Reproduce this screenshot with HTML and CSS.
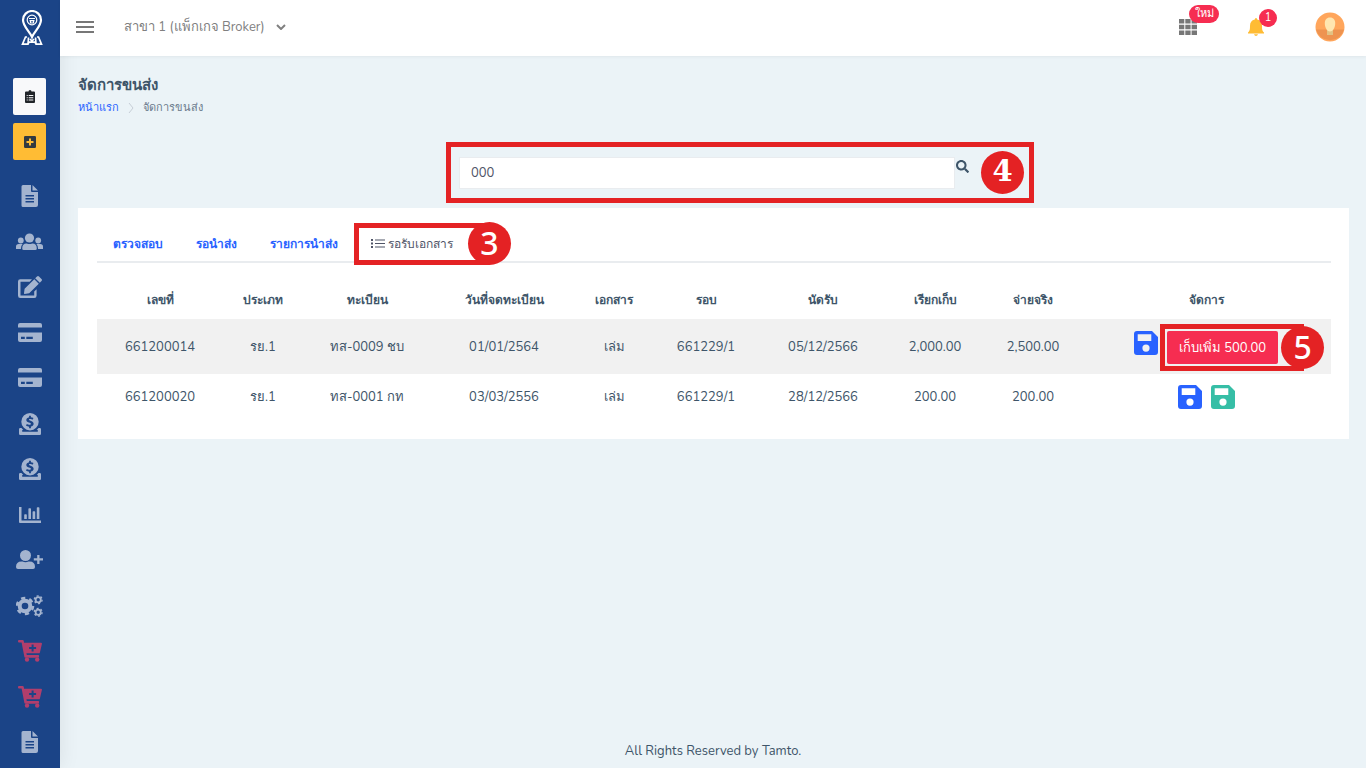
FILE: index.html
```html
<!DOCTYPE html>
<html lang="th">
<head>
<meta charset="utf-8">
<meta name="viewport" content="width=device-width, initial-scale=1">
<title>จัดการขนส่ง</title>
<link rel="stylesheet" href="styles.css">
</head>
<body>
<svg class="sprite" aria-hidden="true">
  <symbol id="file" viewBox="0 0 18 22"><path fill-rule="evenodd" d="M2 0h8v6q0 1 1 1h6v13q0 2-2 2H2q-1.500 0-1.500-1.500v-19Q.5 0 2 0zM4.500 10v1.500h8.500V10zm0 3v1.500h8.500V13zm0 3v1.500h8.500V16zM11.500 0l5.500 5.500h-5.500z"/></symbol>
  <symbol id="users" viewBox="0 0 27 18"><circle cx="4.800" cy="7.500" r="2.900"/><circle cx="22.200" cy="7.500" r="2.900"/><circle cx="13.500" cy="5" r="4.600"/><path d="M0 16v-2.500Q0 11 2.800 11h3.800q-1.600 1.500-1.700 5zM27 16v-2.500q0-2.500-2.800-2.500h-3.800q1.600 1.500 1.700 5zM6.200 15.500q0-5 4.500-5 2.800 1.200 5.600 0 4.500 0 4.500 5 0 1.500-1.500 1.500H7.700q-1.500 0-1.500-1.500z"/></symbol>
  <symbol id="edit" viewBox="0 0 24 22"><path d="M14 3.200H2.300Q0 3.200 0 5.500v14Q0 22 2.300 22h14q2.300 0 2.300-2.500v-6.200L16.200 15.500v4.100H2.500V5.700h9.200z"/><path d="M16.300 3.200l4.500 4.500-9.600 9.600-4.600.6q-.7 0-.6-.7l.6-4.500zM17.200 2.200L19 .5q1-1 2 0l2.500 2.500q1 1 0 2l-1.700 1.700z"/></symbol>
  <symbol id="card" viewBox="0 0 24 20"><path fill-rule="evenodd" d="M2 0h20q2 0 2 2v2.500H0V2q0-2 2-2zM0 9.500h24V17q0 2-2 2H2q-2 0-2-2zm3 4.200V16h3.800v-2.300zm5.300 0V16h6.500v-2.300z"/></symbol>
  <symbol id="donate" viewBox="0 0 22 22"><path fill-rule="evenodd" d="M11 0a8.700 8.700 0 1 1 0 17.400A8.700 8.700 0 0 1 11 0zm-.9 2.800v1.500C6.500 5 6.500 8.700 9.800 9.600c3.400.9 2.300 2.300.4 2.200-.9-.1-1.600-.4-2.300-.9l-1 1.700c1 .7 2 1 3.200 1.100v1.500h1.800v-1.600c3.700-.8 3.600-4.700.2-5.700-3.100-.8-2.300-1.900-.6-1.800.8 0 1.400.3 2 .6l1-1.600c-.8-.5-1.600-.8-2.600-.9V2.800z"/><path d="M1.200 15h1.300q.8 1.200 1.800 2.100H3.200v1.700h15.600v-1.700h-1.100q1-.9 1.800-2.100h1.300Q22 15 22 16.200v4.600q0 1.200-1.200 1.200H1.200Q0 22 0 20.800v-4.600Q0 15 1.200 15z"/></symbol>
  <symbol id="chart" viewBox="0 0 22 18"><path d="M0 1h2.500v13.500H22V17H1q-1 0-1-1zM5.200 9q0-.7.700-.7h1.200q.7 0 .7.700v4H5.200zm4.200-6q0-.7.700-.7h1.200q.7 0 .7.700v10H9.400zm4.200 3q0-.7.700-.7h1.200q.7 0 .7.700v7h-2.600zm4.200-4q0-.7.700-.7h1.200q.7 0 .7.700v11h-2.600z"/></symbol>
  <symbol id="user-plus" viewBox="0 0 27 20"><circle cx="9.500" cy="5.500" r="5.500"/><path d="M0 17q0-5.500 5.500-5.500h1q3 1.300 6 0h1q5.500 0 5.500 5.500 0 2-2 2H2q-2 0-2-2zM21.200 5h2.300v3.300H27v2.300h-3.500V14h-2.300v-3.400h-3.400V8.300h3.400z"/></symbol>
  <symbol id="cogs" viewBox="0 0 27 22"><g fill="none" stroke="currentColor"><circle cx="9" cy="11" r="5.300" stroke-width="4"/><circle cx="9" cy="11" r="8" stroke-width="2.600" stroke-dasharray="4.200 4.178"/><circle cx="22.200" cy="4.700" r="2.600" stroke-width="1.800"/><circle cx="22.200" cy="4.700" r="3.900" stroke-width="1.300" stroke-dasharray="2.042"/><circle cx="22.200" cy="17.200" r="2.600" stroke-width="1.800"/><circle cx="22.200" cy="17.200" r="3.900" stroke-width="1.300" stroke-dasharray="2.042"/></g></symbol>
  <symbol id="cart" viewBox="0 0 24 22"><path fill-rule="evenodd" d="M1 0h3.700q.8 0 1 .8l.4 1.900H23q1.200 0 .9 1.200l-2 8.500q-.2.900-1.100.9H8.400l.4 1.800h11.500q1 0 .8 1.100l-.4 1.500H7.400q-.8 0-1-.8L3.600 2.500H1Q0 2.500 0 1.500V1q0-1 1-1zm12.600 4.500V7h-2.500v2h2.500v2.500h2V9h2.500V7h-2.500V4.500z"/><circle cx="9" cy="19.600" r="2.200"/><circle cx="19.200" cy="19.600" r="2.200"/></symbol>
  <symbol id="save" viewBox="0 0 24 24"><path fill-rule="evenodd" d="M3 0h15l6 6v15q0 3-3 3H3q-3 0-3-3V3q0-3 3-3zm.7 3.300V10h13.600V3.300zM12 13.500a3.600 3.600 0 1 0 0 7.200 3.600 3.600 0 0 0 0-7.200z"/></symbol>
  <symbol id="search" viewBox="0 0 512 512"><path d="M505 442.700L405.300 343c-4.500-4.500-10.600-7-17-7H372c27.600-35.300 44-79.700 44-128C416 93.100 322.900 0 208 0S0 93.100 0 208s93.100 208 208 208c48.300 0 92.700-16.400 128-44v16.300c0 6.400 2.500 12.500 7 17l99.700 99.700c9.400 9.400 24.600 9.400 33.900 0l28.300-28.300c9.400-9.400 9.400-24.600.1-34zM208 336c-70.700 0-128-57.200-128-128 0-70.700 57.200-128 128-128 70.700 0 128 57.200 128 128 0 70.700-57.200 128-128 128z"/></symbol>
</svg>

<div class="app">
  <aside class="sidebar">
    <a class="brand" href="#" aria-label="Tamto">
      <svg width="22" height="36" viewBox="0 0 22 36"><g fill="none" stroke="#fff"><path d="M11 27C9 22 2 16.500 2 10a9 9 0 0 1 18 0c0 6.500-7 12-9 17z" stroke-width="2.200"/><circle cx="11" cy="10" r="4.800" stroke-width="1.200"/><path d="M8 8.500h6M8.500 10.700h5M9.500 10.700v2.300h3v-2.300" stroke-width="1.200"/><path d="M6 27H4.500L1.500 34.200H7l1-2h6l1 2h5.500L17.500 27H16M7.500 27.500L7 34M14.500 27.500l.5 6.500M9 29l2 2 2-2" stroke-width="1.700"/></g></svg>
    </a>
    <div class="shortcuts">
      <a class="shortcut light" href="#" aria-label="รายการงาน"><svg width="10" height="13" viewBox="0 0 10 13"><path fill-rule="evenodd" d="M1 1.500h2.500a1.500 1.500 0 0 1 3 0H9q1 0 1 1V12q0 1-1 1H1q-1 0-1-1V2.500q0-1 1-1zM1.700 5v1h1V5zm2 0v1h4.600V5zm-2 2.200v1h1v-1zm2 0v1h4.600v-1zm-2 2.300v1h1v-1zm2 0v1h4.600v-1z"/></svg></a>
      <a class="shortcut amber" href="#" aria-label="เพิ่มงาน"><svg width="12" height="12" viewBox="0 0 12 12"><path fill-rule="evenodd" d="M1.200 0h9.600Q12 0 12 1.200v9.600q0 1.200-1.200 1.200H1.200Q0 12 0 10.800V1.200Q0 0 1.200 0zM5 2.500V5H2.500v2H5v2.500h2V7h2.500V5H7V2.500z"/></svg></a>
    </div>
    <nav class="menu" aria-label="เมนูหลัก">
      <a href="#" aria-label="เอกสาร"><svg width="18" height="22"><use href="#file"/></svg></a>
      <a href="#" aria-label="ลูกค้า"><svg width="27" height="18"><use href="#users"/></svg></a>
      <a href="#" aria-label="แก้ไข"><svg width="24" height="22"><use href="#edit"/></svg></a>
      <a href="#" aria-label="บัตร"><svg width="24" height="20"><use href="#card"/></svg></a>
      <a href="#" aria-label="ชำระเงิน"><svg width="24" height="20"><use href="#card"/></svg></a>
      <a href="#" aria-label="รายรับ"><svg width="22" height="22"><use href="#donate"/></svg></a>
      <a href="#" aria-label="รายจ่าย"><svg width="22" height="22"><use href="#donate"/></svg></a>
      <a href="#" aria-label="รายงาน"><svg width="22" height="18"><use href="#chart"/></svg></a>
      <a href="#" aria-label="เพิ่มผู้ใช้"><svg width="27" height="20"><use href="#user-plus"/></svg></a>
      <a href="#" aria-label="ตั้งค่า"><svg width="27" height="22"><use href="#cogs"/></svg></a>
      <a class="shop" href="#" aria-label="สั่งซื้อ"><svg width="24" height="22"><use href="#cart"/></svg></a>
      <a class="shop" href="#" aria-label="ร้านค้า"><svg width="24" height="22"><use href="#cart"/></svg></a>
      <a href="#" aria-label="คู่มือ"><svg width="18" height="22"><use href="#file"/></svg></a>
    </nav>
  </aside>

  <div class="page">
    <header class="topbar">
      <button class="icon-btn" type="button" aria-label="เมนู"><svg width="18" height="12" viewBox="0 0 18 12"><path d="M0 0h18v2H0zm0 5h18v2H0zm0 5h18v2H0z"/></svg></button>
      <button class="branch" type="button">สาขา 1 (แพ็กเกจ Broker)<svg width="10" height="6" viewBox="0 0 10 6"><path d="M1 1l4 4 4-4" fill="none" stroke="currentColor" stroke-width="2"/></svg></button>
      <div class="actions">
        <button class="icon-btn" type="button" aria-label="แอป"><svg width="18" height="16" viewBox="0 0 18 16"><path d="M0 0h5.300v4.500H0zm6.300 0h5.300v4.500H6.300zm6.300 0H18v4.500h-5.400zM0 5.700h5.300v4.500H0zm6.300 0h5.300v4.500H6.300zm6.300 0H18v4.500h-5.400zM0 11.400h5.300V16H0zm6.300 0h5.300V16H6.300zm6.300 0H18V16h-5.400z"/></svg><span class="badge new">ใหม่</span></button>
        <button class="icon-btn bell" type="button" aria-label="แจ้งเตือน"><svg width="16" height="18" viewBox="0 0 16 18"><path d="M8 0q1.200 0 1.200 1.500C12.500 2.200 14 4.500 14 8c0 4 .5 5 2 6.500V15.500H0v-1C1.500 13 2 12 2 8c0-3.500 1.500-5.800 4.800-6.500Q6.800 0 8 0zM6 16.300h4Q9.500 18 8 18t-2-1.700z"/></svg><span class="badge count">1</span></button>
        <button class="icon-btn" type="button" aria-label="บัญชีผู้ใช้"><svg width="30" height="30" viewBox="0 0 30 30"><circle cx="15" cy="15" r="14.500" fill="#ffa65c"/><path d="M1 17.500h28A14.500 14.500 0 0 1 1 17.500z" fill="#ee9350"/><path d="M12 17h6v6h-6z" fill="#e2c284"/><path d="M15 5.500c3.500 0 5.500 2.500 5.200 6.500-.4 4.500-2.500 7.500-5.200 7.500S10.200 16.500 9.800 12C9.500 8 11.500 5.500 15 5.500z" fill="#ffe6b0"/></svg></button>
      </div>
    </header>

    <main class="content">
      <h1>จัดการขนส่ง</h1>
      <nav class="crumbs" aria-label="เส้นทาง"><a href="#">หน้าแรก</a><svg width="6" height="10" viewBox="0 0 6 10"><path d="M1 0l4 5-4 5" fill="none" stroke="#c6ced6"/></svg><span>จัดการขนส่ง</span></nav>

      <form class="search-row">
        <div class="search">
          <input type="text" value="000" aria-label="ค้นหา">
          <button class="search-btn" type="button" aria-label="ค้นหา"><svg width="13" height="13"><use href="#search"/></svg></button>
          <span class="step slab">4</span>
        </div>
      </form>

      <section class="card">
        <nav class="tabs" aria-label="สถานะ">
          <a href="#">ตรวจสอบ</a>
          <a href="#">รอนำส่ง</a>
          <a href="#">รายการนำส่ง</a>
          <a class="active" href="#" aria-current="page"><svg width="14" height="9" viewBox="0 0 14 9"><path d="M0 0h2v2H0zm0 3.500h2v2H0zM0 7h2v2H0zM4 .5h10v1H4zM4 4h10v1H4zm0 3.500h10v1H4z"/></svg>รอรับเอกสาร<span class="mark tab-mark"><span class="step">3</span></span></a>
        </nav>
        <table>
          <colgroup><col class="w-no"><col class="w-type"><col class="w-plate"><col class="w-reg"><col class="w-doc"><col class="w-round"><col class="w-due"><col class="w-bill"><col class="w-paid"><col class="w-manage"></colgroup>
          <thead>
            <tr><th>เลขที่</th><th>ประเภท</th><th>ทะเบียน</th><th>วันที่จดทะเบียน</th><th>เอกสาร</th><th>รอบ</th><th>นัดรับ</th><th>เรียกเก็บ</th><th>จ่ายจริง</th><th>จัดการ</th></tr>
          </thead>
          <tbody>
            <tr class="striped"><td>661200014</td><td>รย.1</td><td>ทส-0009 ชบ</td><td>01/01/2564</td><td>เล่ม</td><td>661229/1</td><td>05/12/2566</td><td>2,000.00</td><td>2,500.00</td>
              <td><div class="manage top"><button class="save" type="button" aria-label="บันทึก"><svg width="24" height="24"><use href="#save"/></svg></button><span class="charge-wrap"><button class="charge" type="button">เก็บเพิ่ม 500.00</button><span class="mark charge-mark"><span class="step">5</span></span></span></div></td></tr>
            <tr><td>661200020</td><td>รย.1</td><td>ทส-0001 กท</td><td>03/03/2556</td><td>เล่ม</td><td>661229/1</td><td>28/12/2566</td><td>200.00</td><td>200.00</td>
              <td><div class="manage"><button class="save" type="button" aria-label="บันทึก"><svg width="24" height="24"><use href="#save"/></svg></button><button class="save green" type="button" aria-label="บันทึกและรับเอกสาร"><svg width="24" height="24"><use href="#save"/></svg></button></div></td></tr>
          </tbody>
        </table>
      </section>
    </main>
    <footer>All Rights Reserved by Tamto.</footer>
  </div>
</div>
</body>
</html>
```
FILE: styles.css
```css
* { box-sizing: border-box; }
body { margin: 0; font: 13px/20px "Nunito", "Noto Sans", sans-serif; color: #3e5569; background: #ebf3f7; }
button, input { font: inherit; color: inherit; }
button { border: 0; padding: 0; background: none; cursor: pointer; }
a { color: #2962ff; text-decoration: none; }
svg { display: block; fill: currentColor; flex: none; }
.sprite { position: absolute; width: 0; height: 0; }

.app { display: flex; min-height: 100vh; }
.sidebar { width: 60px; flex: none; display: flex; flex-direction: column; align-items: center; padding: 10px 1px 14px 0; background: #1b4487; box-shadow: 1px 0 20px rgba(0, 0, 0, .08); }
.brand { padding-left: 5px; }
.shortcuts { display: flex; flex-direction: column; gap: 8px; margin: 32px 0 24px; }
.shortcut { width: 33px; height: 37px; display: flex; align-items: center; justify-content: center; border-radius: 2px; color: #212529; }
.light { background: #f8f9fa; }
.amber { background: #ffbc34; color: #343a40; }
.menu { flex: 1; display: flex; flex-direction: column; justify-content: space-between; }
.menu a { height: 24px; display: flex; align-items: center; justify-content: center; color: #a4b4cf; }
.menu .shop { color: #b13e6c; }

.page { flex: 1; min-width: 0; display: flex; flex-direction: column; }
.topbar { height: 56px; display: flex; align-items: center; padding: 0 21px 2px 16px; background: #fff; color: #777; box-shadow: 0 1px 3px rgba(0, 0, 0, .05); }
.icon-btn { position: relative; display: block; }
.branch { display: flex; align-items: center; gap: 11px; margin-left: 30px; color: #808080; }
.actions { display: flex; align-items: center; gap: 51px; margin-left: auto; }
.bell { color: #ffbc34; }
.badge { position: absolute; height: 18px; border-radius: 9px; background: #f62d51; color: #fff; font-size: 11px; line-height: 18px; text-align: center; }
.new { width: 30px; left: 10px; top: -14px; }
.count { width: 18px; left: 11px; top: -9px; }

.content { flex: 1; padding: 17px 17px 16px 18px; }
h1 { margin: 0; font-size: 15px; line-height: 24px; font-weight: 700; }
.crumbs { display: flex; align-items: center; gap: 9px; margin-top: 2px; font-size: 11px; line-height: 18px; color: #6a7a8c; }
.crumbs a { font-weight: 500; }
.search-row { display: grid; grid-template-columns: 368fr 588fr 315fr; margin: 25px 0 5px; }
.search { grid-column: 2; display: flex; align-items: center; padding: 4px 5px 4px 8px; border: 5px solid #e42224; }
.search input { flex: 1; min-width: 0; height: 32px; padding: 0 11px; border: 1px solid #e9ecef; background: #fff; color: #4f5467; }
.search-btn { align-self: flex-start; margin: 9px 12px 0 1px; }
.step { display: block; width: 43px; height: 43px; border-radius: 50%; background: #e42224; color: #fff; font: 500 32px/41px "Noto Sans", sans-serif; text-align: center; }
.slab { font-family: "DejaVu Serif", serif; font-weight: 700; font-size: 29px; }

.card { padding: 15px 18px 20px 19px; background: #fff; }
.tabs { display: flex; border-bottom: 2px solid #e9ecef; }
.tabs a { position: relative; display: flex; align-items: center; gap: 3px; height: 38px; padding: 3px 17px 0 16px; font-size: 12px; font-weight: 600; }
.tabs .active { color: #4f5467; font-weight: 500; }
.mark { position: absolute; border: 5px solid #e42224; border-right: 0; pointer-events: none; }
.mark .step { position: absolute; right: -22px; }
.tab-mark { left: -1px; right: -19px; top: 0; height: 42px; }
.tab-mark .step { top: -6px; }

table { width: 100%; table-layout: fixed; border-collapse: collapse; margin-top: 17px; text-align: center; }
th, td { padding: 0; white-space: nowrap; }
th { height: 39px; font-size: 12px; font-weight: 700; }
td { height: 45px; }
.striped { background: #f1f1f1; }
.striped td { height: 55px; }
.w-no { width: 126px; }
.w-type { width: 80px; }
.w-plate { width: 128px; }
.w-reg { width: 146px; }
.w-doc { width: 74px; }
.w-round { width: 110px; }
.w-due { width: 124px; }
.w-bill { width: 100px; }
.w-paid { width: 96px; }
.w-manage { width: 250px; }
.manage { display: flex; justify-content: center; align-items: flex-start; gap: 9px; }
.top { padding-top: 2px; }
.save { color: #2962ff; }
.green { color: #36bea6; }
.charge-wrap { position: relative; }
.charge { display: block; height: 33px; padding: 0 12px; border-radius: 2px; background: #f62d51; color: #fff; }
.charge-mark { left: -7px; right: -26px; top: -7px; bottom: -7px; }
.charge-mark .step { top: -3px; right: -20px; }
footer { padding: 7px 0; text-align: center; }
```
